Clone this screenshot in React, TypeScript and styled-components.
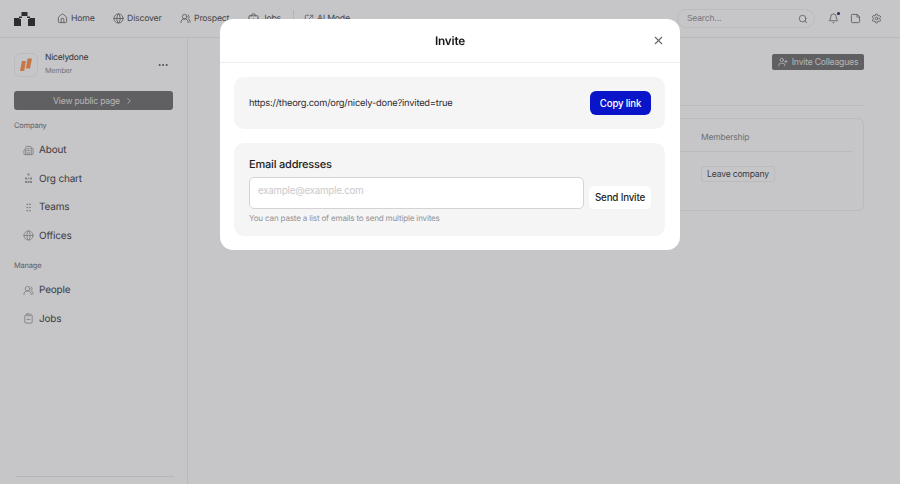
import styled, { createGlobalStyle } from 'styled-components';
import {
  Bell,
  BriefcaseBusiness,
  Building2,
  ChevronRight,
  ClipboardMinus,
  Globe,
  GripVertical,
  Home,
  MoreHorizontal,
  Search,
  Settings,
  SquareArrowOutUpRight,
  StickyNote,
  UserPlus,
  UsersRound,
  X,
} from 'lucide-react';

const GlobalStyle = createGlobalStyle`
  html, body {
    margin: 0;
    padding: 0;
    background: #fff;
    font-family: Inter, 'Liberation Sans', sans-serif;
    color: #1a1a1c;
    letter-spacing: -0.012em;
    text-rendering: geometricPrecision;
  }
  button, input { letter-spacing: inherit; }
  * { box-sizing: border-box; }
`;

const Page = styled.div`
  height: 100vh;
  display: flex;
  flex-direction: column;
  overflow: hidden;
`;

const TopBar = styled.header`
  height: 38px;
  flex: none;
  display: flex;
  align-items: center;
  padding: 0 18px 0 14px;
  border-bottom: 1px solid #eeeeef;
`;

const Nav = styled.nav`
  display: flex;
  align-items: center;
  margin-left: 21px;
  gap: 18.5px;
`;

const NavItem = styled.a`
  display: flex;
  align-items: center;
  gap: 3px;
  font-size: 8.7px;
  font-weight: 400;
  color: #515155;
  svg { color: #77777b; }
`;

const NavSep = styled.span`
  width: 1px;
  height: 18px;
  background: #e6e6e8;
  margin: 0 -8px 0 -7px;
`;

const SearchBox = styled.div`
  width: 138px;
  height: 19px;
  margin-left: auto;
  border: 1px solid #f0f0f1;
  border-radius: 10px;
  display: flex;
  align-items: center;
  justify-content: space-between;
  padding: 0 6px 0 9px;
  font-size: 8.6px;
  color: #97979b;
  svg { color: #77777b; }
`;

const TopIcons = styled.div`
  display: flex;
  align-items: center;
  gap: 10.5px;
  margin-left: 13px;
  color: #77777b;
`;

const BellWrap = styled.span`
  position: relative;
  display: flex;
  &::after {
    content: '';
    position: absolute;
    top: -1px;
    right: -1px;
    width: 3px;
    height: 3px;
    border-radius: 50%;
    background: #1b2a8c;
  }
`;

const Body = styled.div`
  flex: 1;
  display: flex;
  min-height: 0;
`;

const Sidebar = styled.aside`
  width: 188px;
  flex: none;
  display: flex;
  flex-direction: column;
  padding: 14px 14px 7px;
  border-right: 1px solid #eeeeef;
`;

const OrgRow = styled.div`
  display: flex;
  align-items: center;
  gap: 7px;
  height: 25px;
  padding-right: 4px;
  svg.more { margin-left: auto; color: #55555a; }
`;

const OrgLogo = styled.div`
  width: 24px;
  height: 24px;
  border-radius: 6px;
  border: 1px solid #f0f0f1;
  display: flex;
  align-items: center;
  justify-content: center;
`;

const OrgName = styled.div`
  font-size: 8.5px;
  font-weight: 400;
  line-height: 13px;
  color: #3a3a3e;
`;

const OrgRole = styled.div`
  font-size: 7.2px;
  line-height: 12px;
  color: #919195;
`;

const PublicButton = styled.button`
  height: 19px;
  width: 159px;
  margin-top: 14px;
  border: 0;
  border-radius: 3px;
  background: #777778;
  color: #e6e6e6;
  font: 400 8.6px Inter, sans-serif;
  display: flex;
  align-items: center;
  justify-content: center;
  gap: 4px;
`;

const SectionLabel = styled.div<{ $top: number }>`
  margin-top: ${(p) => p.$top}px;
  margin-bottom: 4px;
  font-size: 7.5px;
  font-weight: 400;
  line-height: 12px;
  color: #77777b;
`;

const SideItem = styled.a`
  height: 28.5px;
  display: flex;
  align-items: center;
  gap: 5px;
  padding-left: 9px;
  font-size: 10px;
  font-weight: 400;
  color: #48484c;
  svg { color: #a3a3a7; }
`;

const SideFoot = styled.div`
  margin-top: auto;
  height: 1px;
  width: 158px;
  margin-left: 2px;
  background: #e8e8e9;
`;

const Main = styled.main`
  flex: 1;
  padding: 16px 36px 0 48px;
`;

const TitleRow = styled.div`
  display: flex;
  justify-content: flex-end;
  padding-bottom: 35px;
  border-bottom: 1px solid #f2f2f3;
`;

const InviteButton = styled.button`
  height: 16px;
  width: 92px;
  border: 0;
  border-radius: 2px;
  background: #777778;
  color: #e6e6e6;
  font: 400 8.6px Inter, sans-serif;
  display: flex;
  align-items: center;
  justify-content: center;
  gap: 4px;
  white-space: nowrap;
  padding: 0;
`;

const Card = styled.section`
  height: 93px;
  margin-top: 12px;
  border: 1px solid #f0f0f1;
  border-radius: 6px;
  padding: 0 10px;
`;

const CardRow = styled.div<{ $head?: boolean }>`
  display: grid;
  grid-template-columns: 1fr 152px;
  align-items: center;
  height: ${(p) => (p.$head ? '33px' : '44px')};
  padding-top: ${(p) => (p.$head ? '5px' : '0')};
  font-size: 8.5px;
  color: #8c8c90;
  border-bottom: ${(p) => (p.$head ? '1px solid #f0f0f1' : 'none')};
`;

const LeaveButton = styled.button`
  width: 74px;
  height: 16px;
  padding: 0;
  border: 1px solid #f0f0f1;
  border-radius: 3px;
  background: #fff;
  color: #48484c;
  font: 400 8.6px Inter, sans-serif;
  white-space: nowrap;
`;

const Backdrop = styled.div`
  position: fixed;
  inset: 0;
  background: rgba(26, 26, 34, 0.25);
  backdrop-filter: blur(0.5px);
  display: flex;
  justify-content: center;
  align-items: flex-start;
  padding-top: 19px;
`;

const Modal = styled.div`
  width: 460px;
  background: #fff;
  border-radius: 13px;
  padding-bottom: 14px;
`;

const ModalHead = styled.div`
  position: relative;
  height: 44px;
  display: flex;
  align-items: center;
  justify-content: center;
  border-bottom: 1px solid #eeeeef;
  font-size: 11.8px;
  font-weight: 600;
  color: #151517;
  svg {
    position: absolute;
    right: 15px;
    top: 15px;
    color: #66666a;
  }
`;

const Panel = styled.div`
  margin: 14px 15px 0 14px;
  background: #f5f5f6;
  border-radius: 10px;
  padding: 14px 14px 14px 15px;
`;

const LinkRow = styled(Panel)`
  height: 52px;
  display: flex;
  align-items: center;
  justify-content: space-between;
  font-size: 9.3px;
  color: #2a2a2d;
`;

const CopyButton = styled.button`
  width: 61px;
  height: 24px;
  border: 0;
  border-radius: 6px;
  background: #0a14c8;
  color: #fff;
  font: 500 9.7px Inter, sans-serif;
  padding: 0;
`;

const EmailPanel = styled(Panel)`
  height: 93px;
`;

const EmailLabel = styled.div`
  font-size: 11px;
  font-weight: 500;
  line-height: 15px;
  color: #1d1d20;
`;

const EmailRow = styled.div`
  display: flex;
  align-items: flex-end;
  gap: 5px;
  margin-top: 5px;
`;

const EmailInput = styled.input`
  width: 335px;
  height: 32px;
  border: 1px solid #d4d4d6;
  border-radius: 5px;
  background: #fff;
  padding: 0 8px 5px;
  font: 400 9.7px Inter, sans-serif;
  outline: none;
  &::placeholder { color: #c9c9cc; }
`;

const SendButton = styled.button`
  width: 62px;
  height: 23px;
  padding: 0;
  border: 0;
  border-radius: 5px;
  background: #fff;
  color: #1f1f22;
  font: 500 9.8px Inter, sans-serif;
  white-space: nowrap;
`;

const Hint = styled.div`
  margin-top: 4px;
  font-size: 8.1px;
  line-height: 11px;
  color: #929296;
`;

function Logo() {
  return (
    <svg width="22" height="14" viewBox="0 0 22 14" fill="#323236">
      <rect x="7.500" y="0" width="6" height="4" />
      <path d="M0 6h5V4.500h3V6H5.500v1H7v7H0zM21 6h-5V4.500h-3V6h2.500v1H14v7h7z" />
    </svg>
  );
}

function OrgMark() {
  return (
    <svg width="14" height="14" viewBox="0 0 14 14" fill="#ff9655">
      <path d="M3 3h4L5.200 13H1z" />
      <path d="M8.600 0.500h4.400L11 10.500H6.800z" />
    </svg>
  );
}

function OrgChartIcon() {
  return (
    <svg width="11" height="11" viewBox="0 0 11 11" fill="currentColor">
      <rect x="4.500" y="0.500" width="2" height="2" />
      <rect x="2" y="4.500" width="2" height="2" />
      <rect x="7" y="4.500" width="2" height="2" />
      <rect x="4.500" y="4.500" width="2" height="2" opacity="0.6" />
      <rect x="2" y="8" width="2" height="2" />
      <rect x="4.500" y="8" width="2" height="2" />
      <rect x="7" y="8" width="2" height="2" />
    </svg>
  );
}

export default function App() {
  return (
    <Page>
      <GlobalStyle />
      <TopBar>
        <Logo />
        <Nav>
          <NavItem><Home size={11} />Home</NavItem>
          <NavItem><Globe size={11} />Discover</NavItem>
          <NavItem><UsersRound size={11} />Prospect</NavItem>
          <NavItem><BriefcaseBusiness size={11} />Jobs</NavItem>
          <NavSep />
          <NavItem><SquareArrowOutUpRight size={10} />AI Mode</NavItem>
        </Nav>
        <SearchBox>Search...<Search size={10} /></SearchBox>
        <TopIcons>
          <BellWrap><Bell size={11} /></BellWrap>
          <StickyNote size={11} />
          <Settings size={11} />
        </TopIcons>
      </TopBar>
      <Body>
        <Sidebar>
          <OrgRow>
            <OrgLogo><OrgMark /></OrgLogo>
            <div>
              <OrgName>Nicelydone</OrgName>
              <OrgRole>Member</OrgRole>
            </div>
            <MoreHorizontal className="more" size={12} />
          </OrgRow>
          <PublicButton>View public page <ChevronRight size={10} /></PublicButton>
          <SectionLabel $top={10}>Company</SectionLabel>
          <SideItem><Building2 size={11} />About</SideItem>
          <SideItem><OrgChartIcon />Org chart</SideItem>
          <SideItem><GripVertical size={11} />Teams</SideItem>
          <SideItem><Globe size={11} />Offices</SideItem>
          <SectionLabel $top={10}>Manage</SectionLabel>
          <SideItem><UsersRound size={11} />People</SideItem>
          <SideItem><ClipboardMinus size={11} />Jobs</SideItem>
          <SideFoot />
        </Sidebar>
        <Main>
          <TitleRow>
            <InviteButton><UserPlus size={10} />Invite Colleagues</InviteButton>
          </TitleRow>
          <Card>
            <CardRow $head>
              <span />
              <span>Membership</span>
            </CardRow>
            <CardRow>
              <span />
              <LeaveButton>Leave company</LeaveButton>
            </CardRow>
          </Card>
        </Main>
      </Body>
      <Backdrop>
        <Modal>
          <ModalHead>
            Invite
            <X size={13} />
          </ModalHead>
          <LinkRow>
            https://theorg.com/org/nicely-done?invited=true
            <CopyButton>Copy link</CopyButton>
          </LinkRow>
          <EmailPanel>
            <EmailLabel>Email addresses</EmailLabel>
            <EmailRow>
              <EmailInput placeholder="example@example.com" />
              <SendButton>Send Invite</SendButton>
            </EmailRow>
            <Hint>You can paste a list of emails to send multiple invites</Hint>
          </EmailPanel>
        </Modal>
      </Backdrop>
    </Page>
  );
}
